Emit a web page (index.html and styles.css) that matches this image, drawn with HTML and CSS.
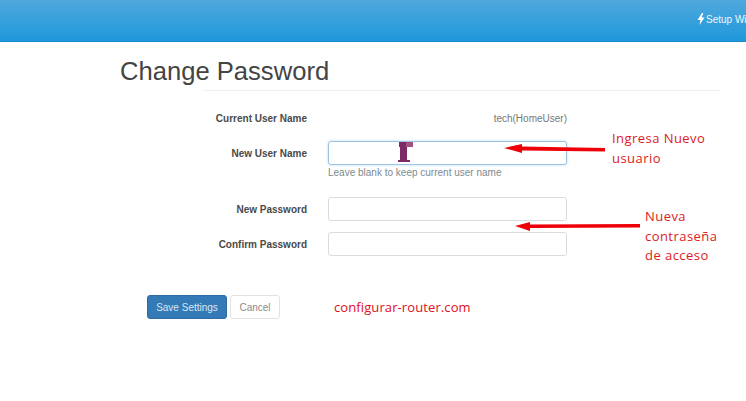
FILE: index.html
```html
<!DOCTYPE html>
<html lang="en">
<head>
  <meta charset="UTF-8">
  <title>Change Password</title>
  <link rel="stylesheet" href="styles.css">
</head>
<body>
  <div class="topbar">
    <div class="setup-link">
      <svg class="bolt" viewBox="0 0 8 12" width="8" height="12"><path d="M5 0 0.5 7H3.4L2.4 12 7.6 4.6H4.6L6.4 0Z" fill="#fff"/></svg>
      <span>Setup Wizard</span>
    </div>
  </div>
  <div class="content">
    <h1>Change Password</h1>
    <div class="rule"></div>
    <div class="form">
      <div class="row row-static">
        <div class="label">Current User Name</div>
        <div class="value">tech(HomeUser)</div>
      </div>
      <div class="row row-new-user">
        <label class="label" for="new_user">New User Name</label>
        <input type="text" id="new_user" class="field field-focus">
      </div>
      <div class="hint">Leave blank to keep current user name</div>
      <div class="row row-pass">
        <label class="label" for="new_pass">New Password</label>
        <input type="password" id="new_pass" class="field">
      </div>
      <div class="row row-confirm">
        <label class="label" for="confirm_pass">Confirm Password</label>
        <input type="password" id="confirm_pass" class="field">
      </div>
    </div>
    <div class="actions">
      <button class="btn btn-save">Save Settings</button>
      <button class="btn btn-cancel">Cancel</button>
      <span class="site-note">configurar-router.com</span>
    </div>
  </div>

  <!-- annotations pasted on top of the screenshot -->
  <svg class="overlay" width="746" height="401" viewBox="0 0 746 401">
    <path d="M504 148 522 144 522 146.500 605 148 605 151.500 522 150.500 522 153Z" fill="#ee0008"/>
    <path d="M515 226 530 222 530 224.500 640 224 640 227.500 530 228 530 231Z" fill="#ee0008"/>
    <path d="M399 142H413V147H407V160H410V162H398V160H400V147H399Z" fill="#7d2a66"/>
    <rect x="406" y="142" width="7" height="5" fill="#a5527f"/>
  </svg>
  <div class="note note-user">Ingresa Nuevo<br>usuario</div>
  <div class="note note-pass">Nueva<br>contraseña<br>de acceso</div>
</body>
</html>
```

FILE: styles.css
```css
html, body {
  margin: 0;
  height: 100%;
  overflow: hidden;
}
body {
  position: relative;
  background: #fff;
  font-family: "Liberation Sans", Arial, sans-serif;
  color: #333;
}
.topbar {
  height: 42px;
  box-sizing: border-box;
  background: linear-gradient(to bottom, #50a8dc, #1e98db);
  border-bottom: 1px solid #1b8ccb;
  display: flex;
  justify-content: flex-end;
  align-items: center;
  overflow: hidden;
  padding-bottom: 3px;
}
.setup-link {
  flex: none;
  width: 49px;
  display: flex;
  align-items: center;
  gap: 1px;
  white-space: nowrap;
  color: #eef7fc;
  font-size: 10px;
}
.bolt {
  flex: none;
}
.content {
  padding-left: 120px;
}
h1 {
  margin: 0;
  padding-top: 14px;
  font-size: 25.6px;
  line-height: 30px;
  font-weight: normal;
  color: #444;
}
.rule {
  height: 1px;
  margin: 4px 26px 0 83px;
  background: #f0f0f0;
}
.row {
  display: flex;
  align-items: center;
  width: 447px;
  gap: 21px;
}
.label {
  flex: none;
  width: 187px;
  text-align: right;
  font-size: 10px;
  font-weight: bold;
  color: #4a4a4a;
}
.value {
  width: 239px;
  text-align: right;
  font-size: 10px;
  color: #777;
}
.row-static {
  height: 16px;
  margin-top: 19px;
}
.row-new-user {
  margin-top: 15px;
}
.row-pass {
  margin-top: 18px;
}
.row-confirm {
  margin-top: 11px;
}
.field {
  flex: none;
  width: 239px;
  height: 24px;
  padding: 0;
  box-sizing: border-box;
  background: #fff;
  border: 1px solid #dcdcdc;
  border-radius: 3px;
  outline: none;
}
.field-focus {
  border-color: #9dc3e3;
  box-shadow: 0 0 3px rgba(102, 175, 233, 0.45);
}
.hint {
  margin: 1px 0 0 208px;
  font-size: 10px;
  line-height: 13px;
  color: #7d8a90;
}
.actions {
  display: flex;
  align-items: center;
  margin: 39px 0 0 27px;
}
.btn {
  height: 24px;
  padding: 0;
  box-sizing: border-box;
  border-radius: 3px;
  font-family: "Liberation Sans", Arial, sans-serif;
  font-size: 10px;
}
.btn-save {
  width: 80px;
  background: #337ab7;
  border: 1px solid #2e6da4;
  color: #d8e6f2;
}
.btn-cancel {
  width: 50px;
  margin-left: 3px;
  background: #fff;
  border: 1px solid #e2e2e2;
  color: #8a8a8a;
}
.site-note {
  margin-left: 54px;
  font-family: "Open Sans", sans-serif;
  font-size: 13px;
  letter-spacing: 0.1px;
  color: #e0101c;
}
.overlay {
  position: absolute;
  left: 0;
  top: 0;
}
.note {
  position: absolute;
  font-family: "Open Sans", sans-serif;
  font-size: 13px;
  line-height: 19.5px;
  letter-spacing: 0.45px;
  color: #dd1a22;
}
.note-user {
  left: 612px;
  top: 129px;
}
.note-pass {
  left: 645px;
  top: 207px;
}
```
